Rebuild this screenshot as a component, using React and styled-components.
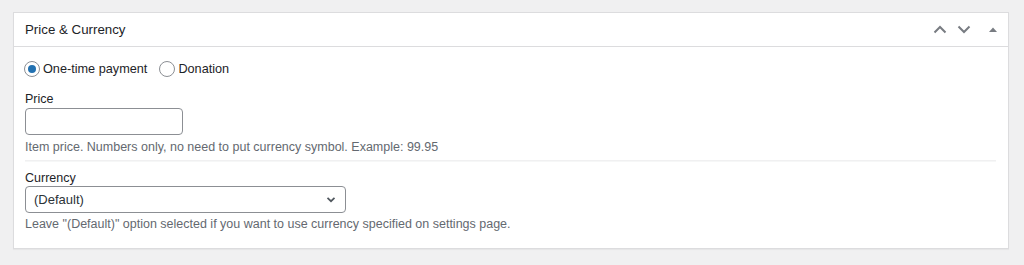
import React from "react";
import styled, { createGlobalStyle } from "styled-components";

const Global = createGlobalStyle`
  html, body { margin: 0; padding: 0; background: #f0f0f1; }
  body { font-family: "Liberation Sans", Arial, sans-serif; color: #1d2327; }
  * { box-sizing: border-box; }
`;

const Page = styled.div`
  padding: 12px 15px 0 13px;
  height: 265px;
`;

const Box = styled.section`
  background: #fff;
  border: 1px solid #dcdcde;
  box-shadow: 0 1px 1px rgba(0,0,0,0.04);
`;

const Header = styled.div`
  height: 34px;
  border-bottom: 1px solid #dcdcde;
  display: flex;
  align-items: center;
  padding: 0 11px 0 11px;
`;

const Title = styled.h2`
  margin: 0;
  flex: 1;
  font-size: 13.3px;
  font-weight: 400;
  color: #1d2327;
`;

const Handles = styled.div`
  display: flex;
  align-items: center;
  color: #787c82;
`;

const HandleBtn = styled.span`
  display: flex;
  align-items: center;
  justify-content: center;
  width: ${p => p.$w || 14}px;
  margin-left: ${p => p.$ml || 0}px;
`;

const Body = styled.div`
  padding: 12px 11px 15px 10px;
`;

const RadioRow = styled.div`
  display: flex;
  align-items: center;
  height: 20px;
  font-size: 12.7px;
`;

const RadioLabel = styled.label`
  display: flex;
  align-items: center;
  gap: 3px;
  margin-right: 12px;
`;

const Radio = styled.span`
  width: 16px;
  height: 16px;
  border-radius: 50%;
  border: 1px solid #8c8f94;
  display: inline-flex;
  align-items: center;
  justify-content: center;
  &::after {
    content: "";
    width: 8px;
    height: 8px;
    border-radius: 50%;
    background: ${p => (p.$checked ? "#2271b1" : "transparent")};
  }
`;

const Field = styled.div`
  padding-left: 1px;
`;

const FieldLabel = styled.div`
  font-size: 12.5px;
  line-height: 16px;
  margin-top: ${p => p.$mt || 0}px;
  margin-bottom: ${p => p.$mb || 0}px;
`;

const TextInput = styled.input`
  display: block;
  width: 158px;
  height: 27px;
  border: 1px solid #8c8f94;
  border-radius: 4px;
  padding: 0 8px;
  font: inherit;
  font-size: 12px;
  outline: none;
`;

const SelectBox = styled.div`
  width: 321px;
  height: 27px;
  border: 1px solid #8c8f94;
  border-radius: 4px;
  display: flex;
  align-items: center;
  justify-content: space-between;
  padding: 0 9px 0 8px;
  font-size: 13px;
  color: #2c3338;
`;

const Help = styled.p`
  margin: ${p => p.$mt || 3}px 0 0;
  font-size: 12.5px;
  line-height: 18px;
  color: #646970;
`;

const Separator = styled.hr`
  border: none;
  border-top: 1px solid #f0f0f1;
  border-bottom: 1px solid #f6f7f7;
  margin: 4px 0 0;
  width: 971px;
`;

const ChevronUp = () => (
  <svg width="14" height="9" viewBox="0 0 14 9">
    <path d="M1.5 7.5 L7 2 L12.5 7.5" fill="none" stroke="currentColor" strokeWidth="2" />
  </svg>
);
const ChevronDown = () => (
  <svg width="14" height="9" viewBox="0 0 14 9">
    <path d="M1.5 1.5 L7 7 L12.5 1.5" fill="none" stroke="currentColor" strokeWidth="2" />
  </svg>
);
const Tri = () => (
  <svg width="8" height="6" viewBox="0 0 8 6">
    <path d="M0 5 L4 0.5 L8 5 Z" fill="currentColor" />
  </svg>
);
const SelectArrow = () => (
  <svg width="10" height="7" viewBox="0 0 10 7">
    <path d="M1.5 1.8 L5 5.2 L8.5 1.8" fill="none" stroke="#50575e" strokeWidth="1.7" />
  </svg>
);

export default function App() {
  return (
    <>
      <Global />
      <Page>
        <Box>
          <Header>
            <Title>Price &amp; Currency</Title>
            <Handles>
              <HandleBtn><ChevronUp /></HandleBtn>
              <HandleBtn $ml={10}><ChevronDown /></HandleBtn>
              <HandleBtn $w={8} $ml={18}><Tri /></HandleBtn>
            </Handles>
          </Header>
          <Body>
            <RadioRow>
              <RadioLabel><Radio $checked />One-time payment</RadioLabel>
              <RadioLabel><Radio />Donation</RadioLabel>
            </RadioRow>
            <Field>
              <FieldLabel $mt={12} $mb={1}>Price</FieldLabel>
              <TextInput type="text" />
              <Help>Item price. Numbers only, no need to put currency symbol. Example: 99.95</Help>
              <Separator />
              <FieldLabel $mt={8}>Currency</FieldLabel>
              <SelectBox>
                <span>(Default)</span>
                <SelectArrow />
              </SelectBox>
              <Help $mt={2}>Leave "(Default)" option selected if you want to use currency specified on settings page.</Help>
            </Field>
          </Body>
        </Box>
      </Page>
    </>
  );
}
